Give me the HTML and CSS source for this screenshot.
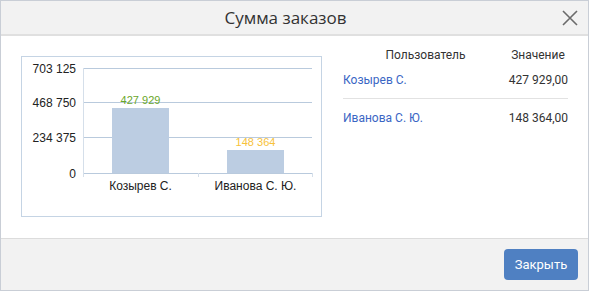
FILE: index.html
```html
<!DOCTYPE html>
<html>
<head>
  <title>Сумма заказов</title>
  <link rel="stylesheet" href="styles.css">
</head>
<body>
  <div class="dialog">
    <div class="dialog-header">
      <span class="dialog-title">Сумма заказов</span>
      <button class="close-btn" aria-label="Закрыть">
        <svg width="16" height="16" viewBox="0 0 16 16">
          <path d="M1 1 L15 15 M15 1 L1 15" stroke="#6b6b6b" stroke-width="1.6" fill="none"/>
        </svg>
      </button>
    </div>
    <div class="dialog-body">
      <div class="chart">
        <svg width="299" height="159" viewBox="0 0 299 159">
          <g stroke="#b9cadd" stroke-width="1">
            <line x1="61" y1="11.5" x2="290" y2="11.5"/>
            <line x1="61" y1="45.5" x2="290" y2="45.5"/>
            <line x1="61" y1="80.5" x2="290" y2="80.5"/>
            <line x1="61" y1="116.5" x2="290" y2="116.5"/>
          </g>
          <g stroke="#d5dfea" stroke-width="1">
            <line x1="61.5" y1="11" x2="61.5" y2="120"/>
            <line x1="176.5" y1="116" x2="176.5" y2="120"/>
            <line x1="290.5" y1="116" x2="290.5" y2="120"/>
          </g>
          <g class="axis-labels" text-anchor="end">
            <text x="54" y="16">703 125</text>
            <text x="54" y="50">468 750</text>
            <text x="54" y="85">234 375</text>
            <text x="54" y="121">0</text>
          </g>
          <rect x="90" y="51" width="57" height="65" fill="#bccde2"/>
          <rect x="205" y="93" width="57" height="23" fill="#bccde2"/>
          <text class="value-label" x="118.5" y="47" fill="#6aa72a" text-anchor="middle">427 929</text>
          <text class="value-label" x="233.5" y="89" fill="#f7c23a" text-anchor="middle">148 364</text>
          <g class="axis-labels" text-anchor="middle">
            <text x="118.5" y="133">Козырев С.</text>
            <text x="233.5" y="133">Иванова С. Ю.</text>
          </g>
        </svg>
      </div>
      <div class="table">
        <div class="th">Пользователь</div>
        <div class="th">Значение</div>
        <div class="td name">Козырев С.</div>
        <div class="td num">427 929,00</div>
        <div class="td name">Иванова С. Ю.</div>
        <div class="td num">148 364,00</div>
      </div>
    </div>
    <div class="dialog-footer">
      <button class="primary-btn">Закрыть</button>
    </div>
  </div>
</body>
</html>
```

FILE: styles.css
```css
body {
  margin: 0;
  font-family: Roboto, "Liberation Sans", Arial, sans-serif;
  color: #333;
}

.dialog {
  width: 587px;
  height: 289px;
  border: 1px solid #c9ced6;
  display: flex;
  flex-direction: column;
  background: #fff;
}

.dialog-header {
  height: 33px;
  background: #f2f2f2;
  border-bottom: 2px solid #e0e0e0;
  display: flex;
  align-items: center;
  justify-content: center;
  padding-right: 18px;
  position: relative;
}

.dialog-title {
  font-family: "Open Sans", sans-serif;
  font-size: 17px;
  color: #333;
}

.close-btn {
  position: absolute;
  right: 10px;
  top: 9px;
  border: none;
  background: none;
  padding: 0;
  width: 16px;
  height: 16px;
  cursor: pointer;
}

.close-btn svg {
  display: block;
}

.dialog-body {
  flex: 1;
  display: flex;
  align-items: flex-start;
  padding: 20px 0 0 20px;
}

.chart {
  width: 299px;
  height: 159px;
  border: 1px solid #c5d4e4;
}

.chart svg {
  display: block;
}

.axis-labels {
  font-family: "Liberation Sans", Arial, sans-serif;
  font-size: 12px;
  fill: #222;
}

.value-label {
  font-family: "Liberation Sans", Arial, sans-serif;
  font-size: 11px;
}

.table {
  margin: -12px 0 0 21px;
  width: 225px;
  display: grid;
  grid-template-columns: 165px 60px;
  font-size: 12px;
}

.th {
  text-align: center;
  color: #333;
  height: 23px;
  line-height: 23px;
}

.td {
  height: 31px;
  line-height: 26px;
}

.td:nth-child(3),
.td:nth-child(4) {
  border-bottom: 1px solid #e2e2e2;
}

.td:nth-child(5),
.td:nth-child(6) {
  line-height: 38px;
  height: 38px;
}

.name {
  color: #3a66c4;
}

.num {
  text-align: right;
  color: #333;
}

.dialog-footer {
  height: 51px;
  background: #f2f2f2;
  border-top: 1px solid #dcdcdc;
  display: flex;
  align-items: center;
  justify-content: flex-end;
  padding-right: 10px;
}

.primary-btn {
  width: 74px;
  height: 31px;
  border: none;
  border-radius: 4px;
  background: #4f80c2;
  color: #fff;
  font-family: Roboto, "Liberation Sans", Arial, sans-serif;
  font-size: 13px;
  cursor: pointer;
}
```
